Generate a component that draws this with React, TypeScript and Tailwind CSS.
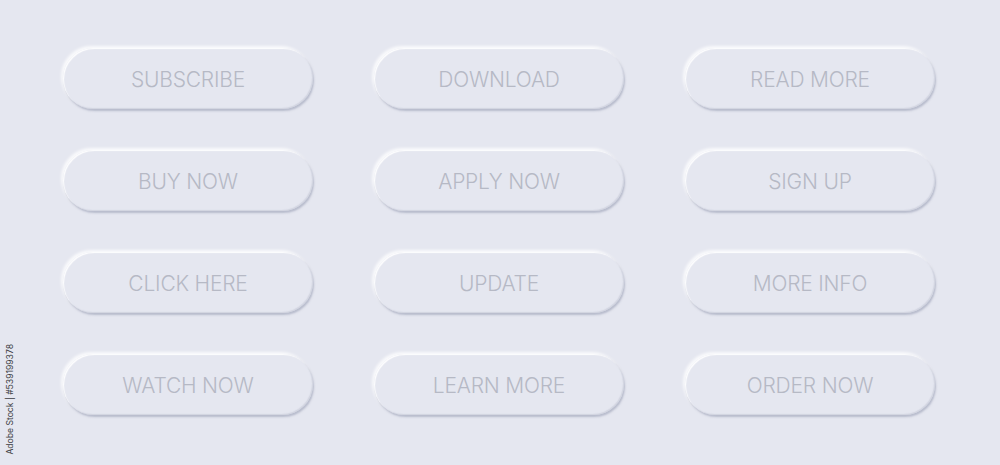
const buttons = [
  "SUBSCRIBE",
  "DOWNLOAD",
  "READ MORE",
  "BUY NOW",
  "APPLY NOW",
  "SIGN UP",
  "CLICK HERE",
  "UPDATE",
  "MORE INFO",
  "WATCH NOW",
  "LEARN MORE",
  "ORDER NOW",
]

function SoftButton({ label }: { label: string }) {
  return (
    <button
      type="button"
      className="flex h-[61px] w-[250px] items-center justify-center rounded-full bg-[#e5e7f0] pt-[3px] text-[21px] font-light tracking-[-0.2px] text-[#b6b9c5] shadow-[1px_2px_2px_rgba(140,146,170,0.5),-2px_-2px_3px_rgba(255,255,255,0.8),inset_1px_1px_1px_rgba(255,255,255,0.95),inset_-1px_-1px_1px_rgba(196,200,213,0.6)]"
    >
      {label}
    </button>
  )
}

export default function App() {
  return (
    <div
      className="relative h-[465px] w-[1000px] overflow-hidden bg-[#e5e7f0]"
      style={{ fontFamily: "Inter, 'Noto Sans', sans-serif" }}
    >
      <div className="grid grid-cols-[250px_250px_250px] gap-x-[61px] gap-y-[41px] pl-[63px] pt-[48px]">
        {buttons.map((label) => (
          <SoftButton key={label} label={label} />
        ))}
      </div>

      {/* stock id, runs up the left edge */}
      <div className="absolute bottom-[10px] left-[4px] origin-bottom-left">
        <span className="block w-max translate-x-[11px] -rotate-90 origin-bottom-left text-[8.6px] leading-none text-[#3c3d42]">
          Adobe Stock | #539199378
        </span>
      </div>
    </div>
  )
}
